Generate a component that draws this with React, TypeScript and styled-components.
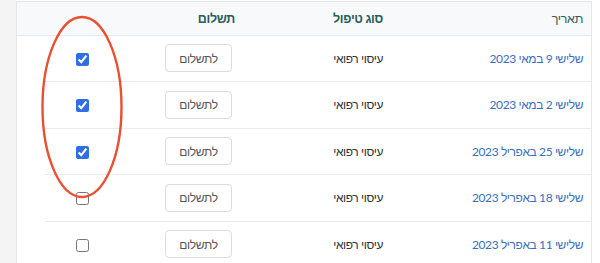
import styled, { createGlobalStyle } from "styled-components";

const GlobalStyle = createGlobalStyle`
	html, body {
		margin: 0;
		padding: 0;
		background: #ffffff;
		overflow: hidden;
		font-family: Lato, "Liberation Sans", sans-serif;
	}
	th, td {
		box-sizing: border-box;
	}
`;

const Page = styled.div`
	display: flex;
	height: 263px;
	position: relative;
`;

const SideStrip = styled.div`
	width: 16px;
	flex: none;
	background: #f4f4f5;
`;

const Card = styled.div`
	flex: 1;
	min-width: 0;
	margin-top: 1px;
	margin-right: 8px;
	border: 1px solid #e7e7e9;
	border-bottom: none;
	background: #ffffff;
`;

const Table = styled.table`
	width: 100%;
	table-layout: fixed;
	border-collapse: collapse;
	direction: rtl;
	font-size: 12px;
	letter-spacing: -0.4px;
`;

const HeadCell = styled.th<{ $bold?: boolean; $width: number }>`
	width: ${(p) => p.$width}px;
	height: 33px;
	padding: 0 8px 0 0;
	text-align: right;
	background: #f7f9fa;
	border-bottom: 1px solid #e6e8ea;
	color: #2b5f5b;
	font-weight: ${(p) => (p.$bold ? 700 : 400)};
	font-size: 12.5px;
	letter-spacing: -0.3px;
`;

const Cell = styled.td<{ $center?: boolean; $plain?: boolean }>`
	height: 46.5px;
	padding: ${(p) => (p.$center ? "0" : "0 8px 0 0")};
	text-align: ${(p) => (p.$center ? "center" : "right")};
	border-bottom: ${(p) => (p.$plain ? "none" : "1px solid #ececee")};
	vertical-align: middle;
	white-space: nowrap;
`;

const DateLink = styled.a`
	color: #3a6fc0;
	text-decoration: none;
`;

const TypeText = styled.span`
	color: #333;
`;

const PayButton = styled.button`
	width: 67px;
	height: 28px;
	margin: 0 3px 0 0;
	padding: 0;
	background: #fff;
	border: 1px solid #dcdcde;
	border-radius: 4px;
	color: #555;
	font-family: Lato, "Liberation Sans", sans-serif;
	font-size: 12px;
	letter-spacing: -0.3px;
	cursor: pointer;
`;

const Check = styled.input`
	width: 13px;
	height: 13px;
	margin: 0;
	accent-color: #2f6fe6;
	vertical-align: middle;
`;

const Annotation = styled.svg`
	position: absolute;
	left: 0;
	top: 0;
	pointer-events: none;
`;

const rows = [
	{ date: "שלישי 9 במאי 2023", paid: true },
	{ date: "שלישי 2 במאי 2023", paid: true },
	{ date: "שלישי 25 באפריל 2023", paid: true },
	{ date: "שלישי 18 באפריל 2023", paid: false },
	{ date: "שלישי 11 באפריל 2023", paid: false },
];

function App() {
	return (
		<>
			<GlobalStyle />
			<Page>
				<SideStrip />
				<Card>
					<Table>
						<thead>
							<tr>
								<HeadCell $width={200}>תאריך</HeadCell>
								<HeadCell $bold $width={148}>
									סוג טיפול
								</HeadCell>
								<HeadCell $bold $width={124}>
									תשלום
								</HeadCell>
								<HeadCell $width={74} />
								<HeadCell $width={28} />
							</tr>
						</thead>
						<tbody>
							{rows.map((row) => (
								<tr key={row.date}>
									<Cell>
										<DateLink href="#">{row.date}</DateLink>
									</Cell>
									<Cell>
										<TypeText>עיסוי רפואי</TypeText>
									</Cell>
									<Cell>
										<PayButton>לתשלום</PayButton>
									</Cell>
									<Cell $center>
										<Check type="checkbox" defaultChecked={row.paid} />
									</Cell>
									<Cell $plain />
								</tr>
							))}
						</tbody>
					</Table>
				</Card>
				<Annotation width="600" height="263">
					<ellipse
						cx="82"
						cy="107"
						rx="39.5"
						ry="90"
						fill="none"
						stroke="#e8502f"
						strokeWidth="2.4"
					/>
				</Annotation>
			</Page>
		</>
	);
}

export default App;
